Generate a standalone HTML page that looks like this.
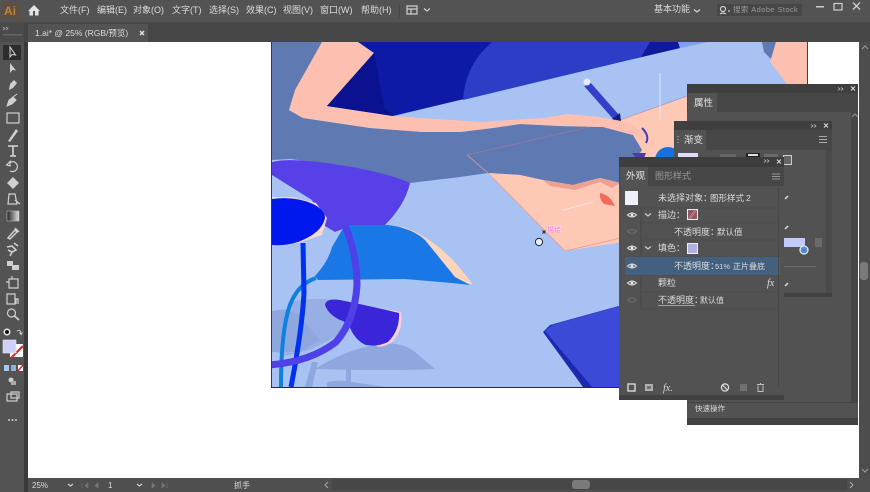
<!DOCTYPE html>
<html lang="zh"><head><meta charset="utf-8"><title>Illustrator</title>
<style>
html,body{margin:0;padding:0;background:#535353;width:870px;height:492px;overflow:hidden}
svg{display:block;filter:blur(.35px)}
text{font-family:"Liberation Sans","Noto Sans CJK SC",sans-serif;font-size:9px;fill:#dcdcdc}
.d{fill:#9a9a9a}
.ic{fill:none;stroke:#d0d0d0;stroke-width:1.2}
.f{fill:#cfcfcf}
</style></head><body>
<svg width="870" height="492" viewBox="0 0 870 492" xmlns="http://www.w3.org/2000/svg">
<rect width="870" height="492" fill="#535353"/>
<!-- tab bar -->
<rect x="0" y="23" width="870" height="19" fill="#464646"/>
<rect x="28" y="24" width="120" height="18" fill="#535353"/>
<!-- canvas -->
<rect x="24" y="42" width="4" height="436" fill="#3a3a3a"/>
<rect x="28" y="42" width="831" height="436" fill="#fff"/>
<!-- artboard -->
<g>
<clipPath id="ab"><rect x="272" y="42" width="535" height="345"/></clipPath>
<g clip-path="url(#ab)">
<rect x="272" y="42" width="535" height="345" fill="#a7c2f3"/>
<!-- shadows -->
<path d="M272 311Q285 308 292 310L288 302Q310 297 335 300Q350 303 358 310L345 332L310 350L285 356L272 350Z" fill="#97afe5"/>
<path d="M272 311Q290 308 300 316L320 340L300 352L272 352Z" fill="#8fa7df"/>
<path d="M315 369Q345 350 375 345Q400 340 415 352L435 369Q390 371 315 369Z" fill="#8fa7df"/>
<path d="M346 369H351V382H346Z" fill="#8fa7df"/>
<path d="M327 383Q330 380 345 381L372 385L385 387H327Z" fill="#8fa7df"/>
<path d="M305 387L312 362L318 362L312 387Z" fill="#8fa7df"/>
<!-- sleeve -->
<path d="M272 42H322L289 110L303 118L370 128L423 132L460 132L493 128L520 124L560 126L603 127L633 135L650 150L640 175L620 183L600 178L573 185L543 180L520 175L488 173L460 177L410 183L340 165L290 159L272 160Z" fill="#5f79b3"/>
<!-- paper -->
<path d="M488 173L520 175L543 180L573 185L600 178L620 183L642 150L633 135L620 120L700 92V230L565 251Z" fill="#fdc9b5"/>
<path d="M467 155L488 173L565 251L625 237" fill="none" stroke="#e89a94" stroke-width=".8"/>
<path d="M467 155L620 120L690 95" fill="none" stroke="#b87c96" stroke-width=".8" opacity=".6"/>
<path d="M543 180L573 185L600 178L620 183L612 188L600 182L575 190L550 186Z" fill="#f0a090"/>
<path d="M563 210L593 202" stroke="#ffe4d8" stroke-width="1"/>
<path d="M600 193Q610 195 615 206L604 204Q599 199 600 193Z" fill="#f26a5a"/>
<!-- hand detail -->
<path d="M642 128Q650 136 646 143" fill="none" stroke="#4a3ab0" stroke-width="2"/>
<path d="M632 153L646 153L644 158L636 158Z" fill="#4a3ab0"/>
<circle cx="668" cy="160" r="13" fill="#1670e0"/>
<!-- arm -->
<path d="M322 42H358L374 53L327 106L393 116L480 122L543 118L567 114L600 117L630 123L642 132L646 141L633 135L603 127L560 126L520 124L493 128L460 132L423 132L370 128L303 118L289 110L295 90Z" fill="#fdc0b0"/>
<!-- shirt -->
<path d="M358 42H678L680 48L460 100L393 116L327 106L374 53Z" fill="#0d1aa5"/>
<path d="M374 53L327 106L393 116L384 108Z" fill="#0a1290"/>
<path d="M463 100Q465 65 492 42H650L641 57Z" fill="#2d3dc6"/>
<path d="M650 42H678L680 48L641 57Z" fill="#0f1a9a"/>
<path d="M678 42H708L680 48Z" fill="#7fa0ee"/>
<!-- top right -->
<path d="M762 42H776L772 60L764 52Z" fill="#5f79b3"/>
<path d="M776 42H807V100L790 88L770 62Z" fill="#fdc0b0"/>
<!-- pen -->
<path d="M587 84L617 118" stroke="#3240c8" stroke-width="7"/>
<path d="M612 119L620 113L621 121Z" fill="#141c80"/>
<circle cx="587" cy="82" r="3.500" fill="#e4ecff"/>
<path d="M660 73V120" stroke="#dce8ff" stroke-width="1"/>
<!-- purple big leaf -->
<path d="M272 162Q290 157 340 165Q385 172 410 183Q405 205 385 225L350 226L335 232L325 226L312 200L272 175Z" fill="#5740e8"/>
<!-- deep blue leaf -->
<path d="M272 197H292L316 203L327 218L322 235L298 243L272 245Z" fill="#fbd8d0"/>
<path d="M272 199Q295 196 313 204Q325 210 325 218Q322 233 298 242Q285 246 272 245Z" fill="#0018ee"/>
<!-- second leaf -->
<path d="M400 226Q440 238 473 285L452 278Q430 245 400 226Z" fill="#fdd4bc"/>
<path d="M345 225H388Q412 228 425 240L455 277L470 285L452 283L405 279L318 280L315 276Q328 262 332 247Z" fill="#1a78e6"/>
<!-- stems -->
<path d="M316 278Q298 284 290 305Q281 330 281 387" fill="none" stroke="#0d80e0" stroke-width="4"/>
<path d="M303 243L304 293Q302 330 291 387" fill="none" stroke="#0030f0" stroke-width="5"/>
<!-- dark purple leaf -->
<path d="M372 307L401 312Q404 330 391 343Q380 349 375 345Z" fill="#fbd0d4"/>
<path d="M325 305Q326 298 340 300Q370 306 399 313Q400 330 388 342Q378 347 366 345Q358 342 352 332Q348 322 340 320Q328 314 325 305Z" fill="#3a25d8"/>
<path d="M345 225Q357 255 357 285Q355 320 336 342Q310 362 269 365" fill="none" stroke="#5040e8" stroke-width="7"/>
<!-- tablet -->
<path d="M543 332L550 325L640 300V387H583Z" fill="#1c28b0"/>
<path d="M545 331L552 325L640 300V387H592Z" fill="#3c4ad8"/>
</g>
<rect x="271" y="42" width="1" height="346" fill="#2c3560"/>
<rect x="271" y="387" width="537" height="1" fill="#2a2a3a"/>
<rect x="807" y="42" width="1" height="346" fill="#4a3a40"/>
<!-- cursor -->
<rect x="547" y="225" width="14" height="8" fill="#ffe0f6" opacity=".5"/>
<text x="547" y="232" style="font-size:7px;fill:#ff7fe0">描绘</text>
<path d="M542.5 230.5L545.5 233.5M545.5 230.5L542.5 233.5" stroke="#222" stroke-width="1"/>
<circle cx="539" cy="242" r="3.6" fill="#e8f2ff" stroke="#222" stroke-width="1"/>
</g>

<!-- top bar -->
<rect x="0" y="0" width="870" height="23" fill="#535353"/>
<rect x="0" y="22" width="870" height="1" fill="#4a4a4a"/>
<rect x="2" y="2" width="17" height="17" fill="#5c5044"/>
<text x="4" y="15" style="font-size:12px;font-weight:bold;fill:#c8802c">Ai</text>
<path d="M28 11L34 5L40 11H38.500V15.500H29.500V11Z" fill="#e4e4e4"/><rect x="33" y="11" width="2" height="4.500" fill="#535353"/>
<text x="60" y="13">文件(F)</text><text x="97" y="13">编辑(E)</text><text x="133" y="13">对象(O)</text><text x="172" y="13">文字(T)</text><text x="209" y="13">选择(S)</text><text x="246" y="13">效果(C)</text><text x="283" y="13">视图(V)</text><text x="320" y="13">窗口(W)</text><text x="361" y="13">帮助(H)</text>
<rect x="399" y="4" width="1" height="14" fill="#484848"/>
<path d="M407 6h10v8h-10zM407 9h10M411 9v5" fill="none" stroke="#cfcfcf" stroke-width="1.200"/>
<path d="M424 8.500l3 2.500 3-2.500" class="ic"/>
<text x="654" y="12">基本功能</text>
<path d="M694 9.500l3 2.500 3-2.500" class="ic"/>
<rect x="717" y="4" width="85" height="12" fill="#474747"/>
<circle cx="723" cy="9" r="2.500" class="ic"/><path d="M720 14q3-2 6 0" class="ic"/><path d="M728 11l2 0" class="ic"/>
<text x="733" y="12" class="d" style="font-size:7.500px;letter-spacing:.4px">搜索 Adobe Stock</text>
<rect x="816" y="6" width="8" height="1.500" fill="#d0d0d0"/>
<rect x="834" y="3.500" width="8" height="6.500" class="ic"/>
<path d="M853 2.500l7 7M860 2.500l-7 7" stroke="#d0d0d0" stroke-width="1.300"/>

<!-- doc tab -->
<text x="35" y="36" style="font-size:8.500px">1.ai* @ 25% (RGB/预览)</text>
<path d="M140 31l4 4M144 31l-4 4" stroke="#e8e8e8" stroke-width="1.300"/>

<!-- toolbar -->
<rect x="0" y="23" width="24" height="19" fill="#4a4a4a"/>
<path d="M3 27l2 1.500-2 1.500M6 27l2 1.500-2 1.500" fill="none" stroke="#bbb" stroke-width=".7"/>
<rect x="3" y="34" width="19" height="1.500" fill="#666"/>
<rect x="3" y="45" width="18" height="15" fill="#2d2d2d"/>
<path d="M10 47V57L12 54.500L15.500 55Z" fill="none" stroke="#d8d8d8" stroke-width="1"/>
<path d="M10 63V73L12.500 70L16 70.500Z" fill="#d0d0d0"/>
<path d="M9 90L10 84L14 80L17 83L13 88Z" class="f"/>
<path d="M7 106L9 100L13 97L16 100L12 104ZM13 97L17 94" class="f" stroke="#cfcfcf"/>
<rect x="7" y="113" width="12" height="10" class="ic"/>
<path d="M8 141L16 129L18 131L10 142Z" class="f"/>
<path d="M8 146H18M13 146V156M10 156H16" stroke="#d8d8d8" stroke-width="1.600" fill="none"/>
<path d="M9 163A5 5 0 1 1 10 171M6.500 165L10 161.500L10 166Z" class="ic"/>
<path d="M13 177L19 183L13 189L7 183Z" class="f"/>
<path d="M9 194L15 194L17 204L8 204ZM15 200L20 204" class="ic"/>
<defs><linearGradient id="g1" x1="0" x2="1"><stop offset="0" stop-color="#222"/><stop offset="1" stop-color="#e4e4e4"/></linearGradient></defs>
<rect x="7" y="211" width="12" height="10" fill="url(#g1)" stroke="#bbb" stroke-width=".6"/>
<path d="M8 238L15 230L17 232L10 239ZM15 228L19 232" stroke="#cfcfcf" stroke-width="1.500" fill="none"/>
<path d="M7 247L12 246L16 250L12 252L8 250M12 252L10 256M14 243L18 246" stroke="#cfcfcf" stroke-width="1.600" fill="none"/>
<rect x="7" y="261" width="6" height="5" class="f"/><rect x="12" y="265" width="7" height="5" class="f"/>
<path d="M9 279H18V288H9ZM12 276V279M6 282H9" class="ic"/>
<path d="M7 294h8v10h-8zM16 304v-5h2v5" class="ic" stroke-width="1"/>
<circle cx="11.500" cy="313" r="4" class="ic"/><path d="M14.500 316L19 320" stroke="#d0d0d0" stroke-width="1.800"/>
<circle cx="7" cy="332" r="3.500" fill="#eee"/><circle cx="7" cy="332" r="2" fill="#111"/>
<path d="M17 331q4-2 4 3M19.500 332.500l1.500 2 1.500-2" fill="none" stroke="#ccc" stroke-width="1"/>
<rect x="10" y="344" width="13" height="13" fill="#fff"/>
<path d="M11 358L23 346" stroke="#e02020" stroke-width="2"/>
<rect x="3" y="340" width="13" height="13" fill="#cfd0fa" stroke="#e8e8e8" stroke-width=".6"/>
<rect x="4" y="365" width="5" height="6" fill="#a8c8ee"/><rect x="11" y="365" width="5" height="6" fill="#90b0e0"/>
<rect x="18" y="365" width="5" height="6" fill="#fff"/><path d="M18 371L23 365" stroke="#e02020" stroke-width="1.400"/>
<circle cx="11" cy="380" r="2.500" class="f"/><rect x="11" y="381" width="5" height="4" fill="#aaa"/>
<rect x="7" y="394" width="10" height="7" class="ic"/><rect x="11" y="392" width="8" height="6" class="ic" fill="#535353"/>
<circle cx="9" cy="420" r="1" class="f"/><circle cx="12.500" cy="420" r="1" class="f"/><circle cx="16" cy="420" r="1" class="f"/>

<!-- right scrollbar -->
<rect x="859" y="42" width="11" height="436" fill="#4d4d4d"/>
<path d="M862 49l3-3 3 3" fill="none" stroke="#9a9a9a"/>
<rect x="860" y="262" width="8" height="18" rx="3" fill="#7a7a7a"/>
<path d="M862 469l3 3 3-3" fill="none" stroke="#9a9a9a"/>

<!-- status bar -->
<rect x="0" y="478" width="870" height="14" fill="#4f4f4f"/>
<rect x="0" y="478" width="24" height="14" fill="#535353"/>
<rect x="24" y="478" width="4" height="14" fill="#3a3a3a"/>
<text x="32" y="488" style="font-size:8px">25%</text>
<path d="M68 484l2.500 2 2.500-2M137 484l2.500 2 2.500-2" class="ic"/>
<path d="M82 483v5M85 485.500l3-2.500v5zM95 485.500l3-2.500v5z" fill="#777" stroke="#777" stroke-width=".6"/>
<text x="108" y="488" style="font-size:8px">1</text>
<path d="M152 483l3 2.500-3 2.500zM162 483l3 2.500-3 2.500zM167 483v5" fill="#777" stroke="#777" stroke-width=".6"/>
<text x="234" y="488" style="font-size:8px">抓手</text>
<path d="M328 482l-3 3 3 3" fill="none" stroke="#aaa"/>
<rect x="332" y="479" width="515" height="11" fill="#474747"/>
<rect x="572" y="480" width="18" height="9" rx="3" fill="#7a7a7a"/>
<path d="M850 482l3 3-3 3" fill="none" stroke="#aaa"/>

<!-- properties panel -->
<rect x="687" y="84" width="171" height="341" fill="#525252"/>
<rect x="687" y="84" width="171" height="9" fill="#3f3f3f"/>
<rect x="687" y="93" width="171" height="19" fill="#474747"/>
<rect x="688" y="93" width="29" height="19" fill="#535353"/>
<text x="694" y="106" style="font-size:9.500px;fill:#e4e4e4">属性</text>
<path d="M838 87.500l2 1.500-2 1.500M841 87.500l2 1.500-2 1.500" fill="none" stroke="#ccc" stroke-width=".7"/>
<path d="M851 86.500l4 4M855 86.500l-4 4" stroke="#ddd" stroke-width="1"/>
<rect x="851" y="112" width="7" height="291" fill="#464646"/>
<path d="M852 117l3-3 3 3" fill="none" stroke="#999"/>
<rect x="687" y="402" width="171" height="1" fill="#444"/>
<text x="695" y="411" style="font-size:7.500px">快速操作</text>
<rect x="687" y="418" width="171" height="7" fill="#414141"/>

<!-- gradient panel -->
<rect x="674" y="121" width="158" height="176" fill="#525252"/>
<rect x="674" y="121" width="158" height="9" fill="#3f3f3f"/>
<rect x="674" y="130" width="158" height="20" fill="#474747"/>
<rect x="675" y="130" width="31" height="20" fill="#535353"/>
<text x="684" y="143" style="font-size:9.500px;fill:#e4e4e4">渐变</text>
<path d="M678 136v1M678 139v1M678 142v1" stroke="#bbb"/>
<path d="M811 124.500l2 1.500-2 1.500M814 124.500l2 1.500-2 1.500" fill="none" stroke="#ccc" stroke-width=".7"/>
<path d="M824 123.500l4 4M828 123.500l-4 4" stroke="#ddd" stroke-width="1"/>
<path d="M819 136.500h8M819 139.500h8M819 142.500h8" stroke="#aaa" stroke-width="1"/>
<rect x="678" y="153" width="20" height="4" fill="#dcdcff"/>
<rect x="720" y="154" width="16" height="3" fill="#666"/>
<rect x="746" y="153" width="14" height="4" fill="#222"/><rect x="748" y="154" width="10" height="2" fill="#ddd"/>
<rect x="764" y="154" width="14" height="3" fill="#6a6a6a"/>
<rect x="783" y="155" width="9" height="10" fill="#ccc"/><rect x="784" y="156" width="7" height="8" fill="#666"/>
<path d="M785 199l3-3" stroke="#ddd" stroke-width="1.500"/><path d="M785 229l3-3M785 286l3-3" stroke="#ddd" stroke-width="1.500"/>
<rect x="784" y="238" width="21" height="9" fill="#c0caff"/>
<circle cx="804" cy="250" r="4" fill="#4f8ad8" stroke="#e6e6e6" stroke-width="1.300"/>
<rect x="815" y="238" width="7" height="9" fill="#6a6a6a"/>
<rect x="784" y="266" width="32" height="1" fill="#6a6a6a"/>
<rect x="674" y="293" width="158" height="4" fill="#414141"/>
<rect x="826" y="150" width="6" height="143" fill="#4a4a4a"/>

<!-- appearance panel -->
<rect x="619" y="157" width="165" height="243" fill="#525252"/>
<rect x="619" y="157" width="165" height="10" fill="#3d3d3d"/>
<rect x="619" y="167" width="165" height="19" fill="#474747"/>
<rect x="620" y="167" width="28" height="19" fill="#535353"/>
<text x="626" y="179" style="font-size:9.500px;fill:#e8e8e8">外观</text>
<text x="655" y="179" class="d" style="font-size:9px">图形样式</text>
<path d="M764 159.500l2 1.500-2 1.500M767 159.500l2 1.500-2 1.500" fill="none" stroke="#ccc" stroke-width=".7"/>
<path d="M777 159.500l4 4M781 159.500l-4 4" stroke="#ddd" stroke-width="1"/>
<path d="M772 174h8M772 176.500h8M772 179h8" stroke="#999" stroke-width="1"/>
<rect x="625" y="191" width="13" height="14" fill="#f0f0fa"/>
<text x="658" y="201">未选择对象：</text><text x="710" y="201" style="font-size:8.500px">图形样式</text><text x="746" y="201" style="font-size:8.500px">2</text>
<path d="M641 208V310" stroke="#474747"/>
<path d="M623 208H780M641 223H780M641 240H780M623 257H780M641 292H780M623 275H780M641 309H780" stroke="#4b4b4b" stroke-width=".7"/>
<rect x="625" y="257" width="155" height="18" fill="#44607f"/>
<rect x="778" y="187" width="1" height="200" fill="#484848"/>
<!-- eyes -->
<g fill="none" stroke="#e0e0e0" stroke-width="1">
<path d="M627.500 215q4.500-4 9 0q-4.500 4-9 0Z"/><path d="M627.500 248q4.500-4 9 0q-4.500 4-9 0Z"/><path d="M627.500 266q4.500-4 9 0q-4.500 4-9 0Z"/><path d="M627.500 283q4.500-4 9 0q-4.500 4-9 0Z"/>
</g>
<g fill="#e0e0e0"><circle cx="632" cy="215" r="1.500"/><circle cx="632" cy="248" r="1.500"/><circle cx="632" cy="266" r="1.500"/><circle cx="632" cy="283" r="1.500"/></g>
<g fill="none" stroke="#6e6e6e" stroke-width="1">
<path d="M627.500 231.500q4.500-4 9 0q-4.500 4-9 0Z"/><path d="M627.500 300q4.500-4 9 0q-4.500 4-9 0Z"/>
</g>
<path d="M645 213.500l3 2.500 3-2.500M645 246.500l3 2.500 3-2.500" class="ic"/>
<text x="658" y="218">描边：</text>
<rect x="687" y="209" width="11" height="11" fill="#eee"/><rect x="688" y="210" width="9" height="9" fill="#8a5a66"/>
<path d="M689 219l7-9" stroke="#e8e8e8" stroke-width="1.600"/><path d="M689 219l7-9" stroke="#b01828" stroke-width=".8"/>
<text x="674" y="235">不透明度：</text><text x="717" y="235" style="font-size:8.500px">默认值</text>
<text x="658" y="251">填色：</text>
<rect x="687" y="243" width="11" height="11" fill="#eee"/><rect x="688" y="244" width="9" height="9" fill="#b0b0e4"/>
<text x="674" y="269">不透明度：</text><text x="715" y="269" style="font-size:7.500px">51%</text><text x="733" y="269" style="font-size:8px">正片叠底</text>
<text x="658" y="286">颗粒</text>
<text x="767" y="286" style="font-family:'Liberation Serif',serif;font-style:italic;font-size:10px;fill:#e0e0e0">fx</text>
<text x="658" y="303">不透明度：</text><text x="700" y="303" style="font-size:8px">默认值</text>
<rect x="658" y="305" width="37" height="1" fill="#a0a0a0"/>
<!-- footer -->
<rect x="628" y="384" width="7" height="7" fill="none" stroke="#e4e4e4" stroke-width="1.300"/>
<rect x="645" y="384" width="8" height="7" fill="#b0b0b0"/><rect x="647" y="386" width="4" height="3" fill="#707070"/>
<text x="663" y="391" style="font-family:'Liberation Serif',serif;font-style:italic;font-size:10px;fill:#d8d8d8">fx.</text>
<circle cx="725" cy="387.500" r="3.600" fill="none" stroke="#e0e0e0" stroke-width="1.200"/><path d="M722.500 385l5 5" stroke="#e0e0e0" stroke-width="1.200"/>
<rect x="740" y="384" width="7" height="7" fill="#707070"/>
<path d="M757 384.500h7M758 385.500v6h5v-6M760.500 383v1.500" fill="none" stroke="#c0c0c0" stroke-width="1"/>
<rect x="619" y="395" width="165" height="5" fill="#414141"/>
</svg>
</body></html>
